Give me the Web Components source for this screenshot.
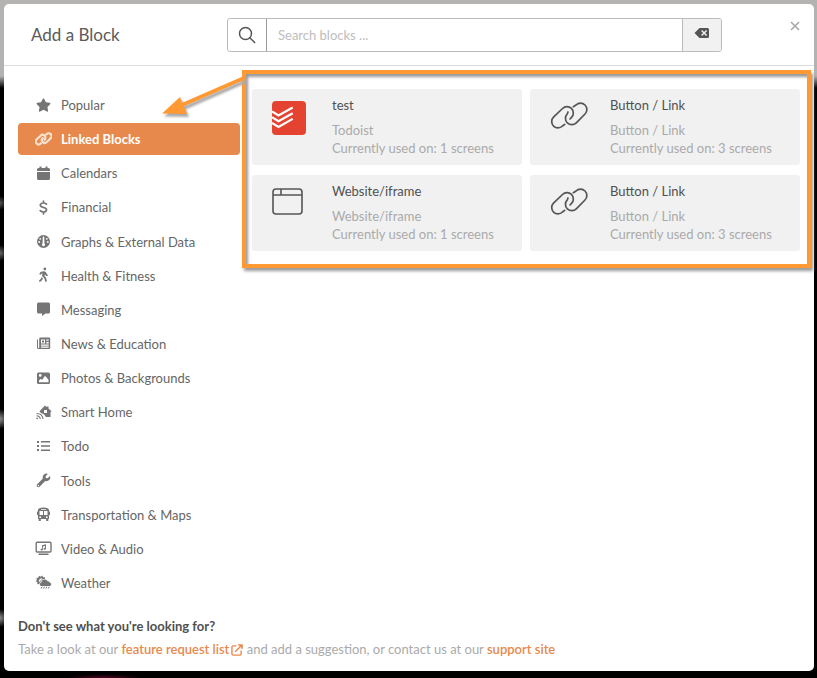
<!DOCTYPE html>
<html lang="en">
<head>
<meta charset="utf-8">
<meta name="viewport" content="width=device-width, initial-scale=1">
<title>Add a Block</title>
<style>
  * { box-sizing: border-box; }

  body {
    margin: 0;
    min-height: 100vh;
    display: flex;
    padding: 4px 3px 7px 4px;
    font: 13px/18px Lato, "Open Sans", sans-serif;
    color: #666;
    /* dimmed page behind the dialog */
    background:
      radial-gradient(ellipse 38px 4px at 104px 100%, #4a0820, transparent) no-repeat,
      radial-gradient(circle 7px at 0 203px, #555, transparent) no-repeat,
      radial-gradient(circle 8px at 0 253px, #666, transparent) no-repeat,
      radial-gradient(circle 10px at 0 419px, #888, transparent) no-repeat,
      radial-gradient(circle 9px at 0 618px, #888, transparent) no-repeat,
      linear-gradient(#b5b3b2 76px, #000 88px);
  }
</style>
</head>
<body>
<block-dialog>
  <span slot="title">Add a Block</span>
  <search-box slot="search" placeholder="Search blocks ..."></search-box>

  <category-item slot="nav" icon="star">Popular</category-item>
  <category-item slot="nav" icon="link" active>Linked Blocks</category-item>
  <category-item slot="nav" icon="calendar">Calendars</category-item>
  <category-item slot="nav" icon="dollar">Financial</category-item>
  <category-item slot="nav" icon="gauge">Graphs &amp; External Data</category-item>
  <category-item slot="nav" icon="walking">Health &amp; Fitness</category-item>
  <category-item slot="nav" icon="message">Messaging</category-item>
  <category-item slot="nav" icon="news">News &amp; Education</category-item>
  <category-item slot="nav" icon="image">Photos &amp; Backgrounds</category-item>
  <category-item slot="nav" icon="home">Smart Home</category-item>
  <category-item slot="nav" icon="list">Todo</category-item>
  <category-item slot="nav" icon="wrench">Tools</category-item>
  <category-item slot="nav" icon="bus">Transportation &amp; Maps</category-item>
  <category-item slot="nav" icon="screen">Video &amp; Audio</category-item>
  <category-item slot="nav" icon="weather">Weather</category-item>

  <block-card icon="todoist" type="Todoist" used="1">test</block-card>
  <block-card icon="chain" type="Button / Link" used="3">Button / Link</block-card>
  <block-card icon="window" type="Website/iframe" used="1">Website/iframe</block-card>
  <block-card icon="chain" type="Button / Link" used="3">Button / Link</block-card>

  <dialog-help slot="help">Don't see what you're looking for?</dialog-help>
</block-dialog>

<script>
// Both link icons share one pair of interlocked rings
const RINGS = `
  <path d="M14.7 23.3L12.5 25A6.3 6.3 0 0 1 3.5 16.1L12.5 7.5A6.3 6.3 0 0 1 21.5 16.4L20 18"/>
  <path d="M23.3 5.7L26 4A6.3 6.3 0 0 1 35 13L26.3 21.8A6.3 6.3 0 0 1 17.3 12.9L18 11"/>`;

// name: [width, height, viewBox, markup]
const ICONS = {
  star: [17, 17, '-40 -55 656 656', '<path d="M259.3 17.8L194 150.2 47.9 171.5c-26.2 3.8-36.7 36.1-17.7 54.6l105.7 103-25 145.5c-4.5 26.3 23.2 46 46.4 33.7L288 439.6l130.7 68.7c23.2 12.2 50.9-7.4 46.4-33.7l-25-145.5 105.7-103c19-18.5 8.5-50.8-17.7-54.6L382 150.2 316.7 17.8c-11.7-23.6-45.6-23.9-57.4 0z"/>'],
  link: [17, 17, '0 -3 38 38', `<g fill="none" stroke="currentColor" stroke-width="4.8">${RINGS}</g>`],
  calendar: [17, 17, '0 0 17 17', '<path d="M2 6V4.5Q2 3 3.500 3H4.500V1.500h2V3h4V1.500h2V3h1Q15 3 15 4.500V6zM2 7h13v6.500q0 1.500-1.500 1.500h-10Q2 15 2 13.500z"/>'],
  dollar: [17, 17, '0 0 17 17', '<path fill="none" stroke="currentColor" stroke-width="1.700" stroke-linecap="round" d="M11.500 5.200C10.500 4.400 9.500 4 8.400 4 5 4 4.400 7 6.800 7.900l3.200 1.100c2.500 1 1.800 4-1.500 4-1.300 0-2.500-.5-3.300-1.300M8.500 2.200V4M8.500 13v2"/>'],
  gauge: [17, 17, '0 0 17 17', '<path d="M8.500 2a6.500 6.500 0 1 0 0 13 6.500 6.500 0 0 0 0-13z"/><g fill="#fff"><path d="M7.800 3.500h1.400l.3 7a1.500 1.500 0 1 1-2 0z"/><circle cx="5.200" cy="5.800" r=".9"/><circle cx="11.800" cy="5.800" r=".9"/><circle cx="4.200" cy="9" r=".9"/><circle cx="12.800" cy="9" r=".9"/></g>'],
  walking: [17, 17, '-144 -20 608 608', '<path d="M208 96c26.500 0 48-21.500 48-48S234.500 0 208 0s-48 21.500-48 48 21.500 48 48 48zm94.500 149.100l-23.300-11.800-9.700-29.400c-14.700-44.600-55.700-75.800-102.200-75.900-36-.1-55.900 10.100-93.300 25.200-21.600 8.700-39.300 25.200-49.700 46.200L17.600 213c-7.800 15.800-1.500 35 14.200 42.900 15.600 7.900 34.600 1.500 42.500-14.300L81 228c3.500-7 9.300-12.500 16.500-15.400l26.800-10.800-15.200 60.700c-5.200 20.800.4 42.900 14.900 58.800l59.900 65.400c7.200 7.900 12.300 17.400 14.900 27.700l18.300 73.300c4.300 17.100 21.700 27.600 38.800 23.300 17.100-4.300 27.600-21.700 23.300-38.800l-22.200-89c-2.600-10.300-7.700-19.900-14.900-27.700l-45.500-49.700 17.200-68.700 5.500 16.500c5.300 16.100 16.700 29.400 31.700 37l23.300 11.800c15.600 7.900 34.600 1.500 42.500-14.300 7.700-15.700 1.400-35.100-14.300-43zM73.600 385.800c-3.200 8.100-8 15.400-14.200 21.500l-50 50.100c-12.500 12.500-12.500 32.800 0 45.300s32.700 12.500 45.200 0l59.400-59.400c6.100-6.100 10.900-13.400 14.200-21.500l13.500-33.800c-55.300-60.300-38.700-41.800-47.400-53.700z"/>'],
  message: [17, 17, '0 0 17 17', '<path d="M3.500 1.500h10Q15 1.500 15 3v8q0 1.500-1.500 1.500H10.500l-3.500 2.500v-2.500H3.500Q2 12.500 2 11V3q0-1.500 1.500-1.500z"/>'],
  news: [17, 17, '0 0 17 17', '<path fill-rule="evenodd" d="M5.500 2.500H14q1.200 0 1.200 1.200v9.100Q15.200 14 14 14H3.500Q2 14 2 12.500V4.500h1v8q0 .6.600.600.600 0 .600-.6V3.700Q4.200 2.500 5.500 2.500zM6 4.500v4h4v-4zm5.300 0v1.200h2.400V4.500zm0 2.600v1.300h2.400V7.100zM6 9.600v1.100h7.700V9.600zm0 2v1.100h7.700v-1.100z"/><path d="M7 5.500h2v2H7z"/>'],
  image: [17, 17, '0 0 17 17', '<path fill-rule="evenodd" d="M3.500 2.500h10Q15 2.500 15 4v8.500q0 1.500-1.500 1.500h-10Q2 14 2 12.500V4q0-1.500 1.500-1.500zm1.700 1.500a1.400 1.400 0 1 0 0 2.800 1.400 1.400 0 0 0 0-2.800zM4 12.200h9.500V9.700L10 5.800 7 10 5.700 8.800 4 10.500z"/>'],
  home: [17, 17, '0 0 17 17', '<path fill-rule="evenodd" d="M10 1.500l2 1.700V2.500h1.500v2L16.500 7.300l-1 1V13h-4.700Q9.500 9.500 5.500 9V8.300l-1-1zM9 6v3h3V6z"/><path fill="none" stroke="currentColor" stroke-width="1.100" d="M1.500 9.500q6 0 6.500 5.500M1.500 11.700q3.300 0 3.800 3.300"/><circle cx="2.200" cy="14.300" r=".9"/>'],
  list: [17, 17, '0 0 17 17', '<path d="M2 3h2v2H2zM2 7h2v2H2zM2 11h2v2H2zM6 3h9v1.600H6zM6 7.200h9v1.600H6zM6 11.400h9V13H6z"/>'],
  wrench: [17, 17, '-64 -60 640 640', '<path d="M507.730 109.100c-2.240-9.030-13.540-12.090-20.120-5.510l-74.360 74.360-67.880-11.310-11.310-67.880 74.360-74.360c6.620-6.620 3.430-17.900-5.660-20.160-47.380-11.740-99.550.91-136.580 37.930-39.640 39.640-50.550 97.100-34.050 147.200L18.740 402.760c-24.990 24.990-24.990 65.510 0 90.500 24.990 24.990 65.510 24.990 90.500 0l213.210-213.210c50.120 16.710 107.470 5.680 147.370-34.220 37.070-37.070 49.700-89.320 37.910-136.730zM64 472c-13.250 0-24-10.750-24-24 0-13.260 10.750-24 24-24s24 10.740 24 24c0 13.250-10.750 24-24 24z"/>'],
  bus: [17, 17, '0 0 17 17', '<path fill-rule="evenodd" d="M8.500 1.500C12 1.500 14 2.500 14 4v1.500h1V9h-1v4h-.7v2h-2.100v-2H5.800v2H3.700v-2H3V9H2V5.500h1V4c0-1.500 2-2.500 5.500-2.500zM6 3v.8h5V3zM4.500 5v4H8V5zM9 5v4h3.500V5zM5.200 10.300a.9.900 0 1 0 0 1.800.9.900 0 0 0 0-1.800zm6.600 0a.9.900 0 1 0 0 1.800.9.900 0 0 0 0-1.800z"/>'],
  screen: [17, 17, '0 0 17 17', '<rect x="1.200" y="2.200" width="14.800" height="9.800" rx="1" fill="none" stroke="currentColor" stroke-width="1.400"/><path d="M3.500 13.500h10V15h-10zM7 5.300l4-1v4.400a1.200.9 0 1 1-.9-.8V6l-2.200.6v2.900A1.200.9 0 1 1 7 8.700z"/>'],
  weather: [17, 17, '0 0 17 17', '<path d="M4 1.800l1.700 1L7.300 1.500l.8 1.800 2-.1-.3 1.700C7.300 4.800 6 6 5.800 8 5 8.400 4.400 9 4.300 10l-2 .2.100-2L.8 7.200l1.200-1.500-.7-1.800 2-.2z"/><path fill="#fff" d="M6.800 4.200q-2.800.2-3 3.200l1.400.3Q5.500 5.500 7.300 5z"/><path d="M9.500 5.500c1.500 0 2.500.6 3.100 1.700 1.400-.2 2.200.6 2.200 1.600 2.200.5 1.800 3.200-.2 3.200H7c-2.700 0-3-3.300-.5-3.600C6.400 6.500 7.700 5.500 9.500 5.500z"/><path stroke="currentColor" d="M7 12.700l-.8 1.800M9.400 12.700l-.8 1.800M11.800 12.700l-.8 1.800M14.200 12.700l-.8 1.800"/>'],
  search: [18, 18, '0 0 18 18', '<g fill="none" stroke="currentColor" stroke-width="1.500" stroke-linecap="round"><circle cx="7.500" cy="7.500" r="6"/><path d="M12 12l4.700 4.500"/></g>'],
  backspace: [16, 12, '0 0 16 12', '<path fill-rule="evenodd" d="M5.500 1h8Q15 1 15 2.500v7q0 1.500-1.500 1.500h-8L.5 6zm1.600 3l2 2-2 2 1 1 2-2 2 2 1-1-2-2 2-2-1-1-2 2-2-2z"/>'],
  close: [12, 12, '0 0 12 12', '<path fill="none" stroke="currentColor" stroke-width="1.700" d="M2 2l8 8M10 2l-8 8"/>'],
  external: [12, 12, '0 0 13 13', '<g fill="none" stroke="currentColor" stroke-width="1.500"><path d="M6 2H2.500Q1 2 1 3.500v7Q1 12 2.500 12h7q1.500 0 1.500-1.500V7M4.500 8.500L11 2"/><path d="M7.500 1H12v4.500"/></g><path d="M8.500 1H12v3.500z"/>'],
  todoist: [34, 34, '0 0 34 34', '<rect width="34" height="34" rx="4" fill="#e44332"/><path fill="none" stroke="#fff" stroke-width="2.200" d="M0 10.500l6.500 4 14.200-8M0 16.200l6.500 4 14.200-8M0 21.900l6.500 4 14.200-8"/>'],
  chain: [38, 34, '0 0 38 34', `<g fill="none" stroke="currentColor" stroke-width="1.700" stroke-linecap="round">${RINGS}</g>`],
  window: [32, 34, '0 0 32 34', '<g fill="none" stroke="currentColor" stroke-width="1.600"><rect x="1" y="2" width="29" height="25" rx="3"/><path d="M1 8h29M9 2v6"/></g>']
};

function icon(name) {
  const [w, h, box, body] = ICONS[name];
  return `<svg width="${w}" height="${h}" viewBox="${box}" fill="currentColor" aria-hidden="true">${body}</svg>`;
}

class SearchBox extends HTMLElement {
  connectedCallback() {
    this.attachShadow({ mode: 'open' }).innerHTML = `
      <style>
        :host { display: block; }

        .group {
          box-sizing: border-box;
          display: flex;
          height: 34px;
          border: 1px solid #bbb;
          border-radius: 3px;
          overflow: hidden;
        }

        label, button {
          box-sizing: border-box;
          flex: none;
          width: 39px;
          display: flex;
          align-items: center;
          justify-content: center;
          color: #555;
        }

        label { border-right: 1px solid #999; }

        button {
          border: 0;
          border-left: 1px solid #bbb;
          padding: 0 0 3px;
          background: #f1f1f1;
          cursor: pointer;
        }

        input {
          flex: 1;
          min-width: 0;
          border: 0;
          outline: 0;
          padding: 0 11px;
          font: inherit;
          color: #555;
          background: #fff;
        }

        input::placeholder { color: #bdbdbd; }
      </style>
      <div class="group">
        <label for="query" aria-label="Search">${icon('search')}</label>
        <input id="query" type="text" placeholder="${this.getAttribute('placeholder')}">
        <button type="button" aria-label="Clear search">${icon('backspace')}</button>
      </div>
    `;

    const input = this.shadowRoot.querySelector('input');
    this.shadowRoot.querySelector('button').addEventListener('click', () => {
      input.value = '';
      input.focus();
    });
  }
}

class CategoryItem extends HTMLElement {
  connectedCallback() {
    this.attachShadow({ mode: 'open' }).innerHTML = `
      <style>
        :host { display: block; }

        button {
          width: 100%;
          height: 32px;
          display: flex;
          align-items: center;
          gap: 9px;
          padding: 0 17px;
          border: 0;
          border-radius: 4px;
          background: none;
          color: #666;
          font: inherit;
          text-align: left;
          white-space: nowrap;
          cursor: pointer;
        }

        svg { flex: none; color: #757575; }

        :host([active]) button {
          background: #e7894c;
          color: #fff;
          font-weight: bold;
        }

        :host([active]) svg { color: #fbe3d3; }
      </style>
      <button type="button">${icon(this.getAttribute('icon'))}<slot></slot></button>
    `;
  }
}

class BlockCard extends HTMLElement {
  connectedCallback() {
    this.attachShadow({ mode: 'open' }).innerHTML = `
      <style>
        :host {
          display: flex;
          padding: 7px 12px 8px 20px;
          border-radius: 3px;
          background: #f1f1f1;
          cursor: pointer;
          box-sizing: border-box;
        }

        .icon {
          flex: none;
          width: 60px;
          padding-top: 5px;
          color: #555;
        }

        svg { display: block; }
        h3, p { margin: 0; font: inherit; }
        h3 { margin-bottom: 7px; color: #505050; }
        p { color: #aaa; }
      </style>
      <div class="icon">${icon(this.getAttribute('icon'))}</div>
      <div>
        <h3><slot></slot></h3>
        <p>${this.getAttribute('type')}</p>
        <p>Currently used on: ${this.getAttribute('used')} screens</p>
      </div>
    `;
  }
}

class DialogHelp extends HTMLElement {
  connectedCallback() {
    this.attachShadow({ mode: 'open' }).innerHTML = `
      <style>
        :host { display: block; }
        h2, p { margin: 0; font-size: 13px; line-height: 18px; }
        h2 { margin-bottom: 5px; color: #505050; }
        p { color: #aaa; }
        a { color: #e7894c; font-weight: 600; text-decoration: none; }
        svg { margin-left: 2px; vertical-align: -2px; }
      </style>
      <h2><slot></slot></h2>
      <p>Take a look at our <a href="#features">feature request list${icon('external')}</a> and add a suggestion, or contact us at our <a href="#support">support site</a></p>
    `;
  }
}

class BlockDialog extends HTMLElement {
  connectedCallback() {
    this.attachShadow({ mode: 'open' }).innerHTML = `
      <style>
        :host {
          flex: 1;
          min-width: 0;
          display: flex;
          flex-direction: column;
          border-radius: 5px;
          background: #fff;
        }

        header {
          box-sizing: border-box;
          display: grid;
          grid-template-columns: 196px minmax(0, 495px) 1fr;
          align-items: center;
          height: 62px;
          padding: 0 13px 0 27px;
          border-bottom: 1px solid #ddd;
        }

        h1 {
          margin: 0;
          font-size: 17px;
          line-height: 24px;
          font-weight: normal;
          color: #5a5a5a;
        }

        .close {
          align-self: start;
          justify-self: end;
          display: flex;
          margin-top: 16px;
          padding: 0;
          border: 0;
          background: none;
          color: #aaa;
          cursor: pointer;
        }

        .body {
          flex: 1;
          display: grid;
          grid-template-columns: 222px minmax(0, 1fr);
          gap: 2px;
          padding: 4px 3px 0 14px;
        }

        nav {
          display: flex;
          flex-direction: column;
          justify-content: space-between;
          padding-top: 19px;
        }

        /* highlighted results frame */
        section {
          position: relative;
          align-self: start;
          display: grid;
          grid-template-columns: repeat(2, minmax(0, 1fr));
          gap: 10px 8px;
          padding: 15px 7px 13px 6px;
          border: 4px solid #ff9933;
          box-shadow: 2px 3px 3px #999, inset 2px 3px 3px #999;
        }

        .arrow {
          position: absolute;
          right: 100%;
          top: -4px;
          overflow: visible;
          filter: drop-shadow(2px 3px 1px #aaa);
          pointer-events: none;
        }

        footer { padding: 18px 14px 13px; }
      </style>
      <header>
        <h1><slot name="title"></slot></h1>
        <slot name="search"></slot>
        <button class="close" type="button" aria-label="Close">${icon('close')}</button>
      </header>
      <div class="body">
        <nav><slot name="nav"></slot></nav>
        <section>
          <slot></slot>
          <svg class="arrow" width="84" height="48" viewBox="0 0 84 48" aria-hidden="true">
            <path d="M82 8L20 35" stroke="#ff9933" stroke-width="4"/>
            <path d="M0 43.500L18 27l7 17z" fill="#ff9933"/>
          </svg>
        </section>
      </div>
      <footer><slot name="help"></slot></footer>
    `;
  }
}

customElements.define('search-box', SearchBox);
customElements.define('category-item', CategoryItem);
customElements.define('block-card', BlockCard);
customElements.define('dialog-help', DialogHelp);
customElements.define('block-dialog', BlockDialog);
</script>
</body>
</html>
